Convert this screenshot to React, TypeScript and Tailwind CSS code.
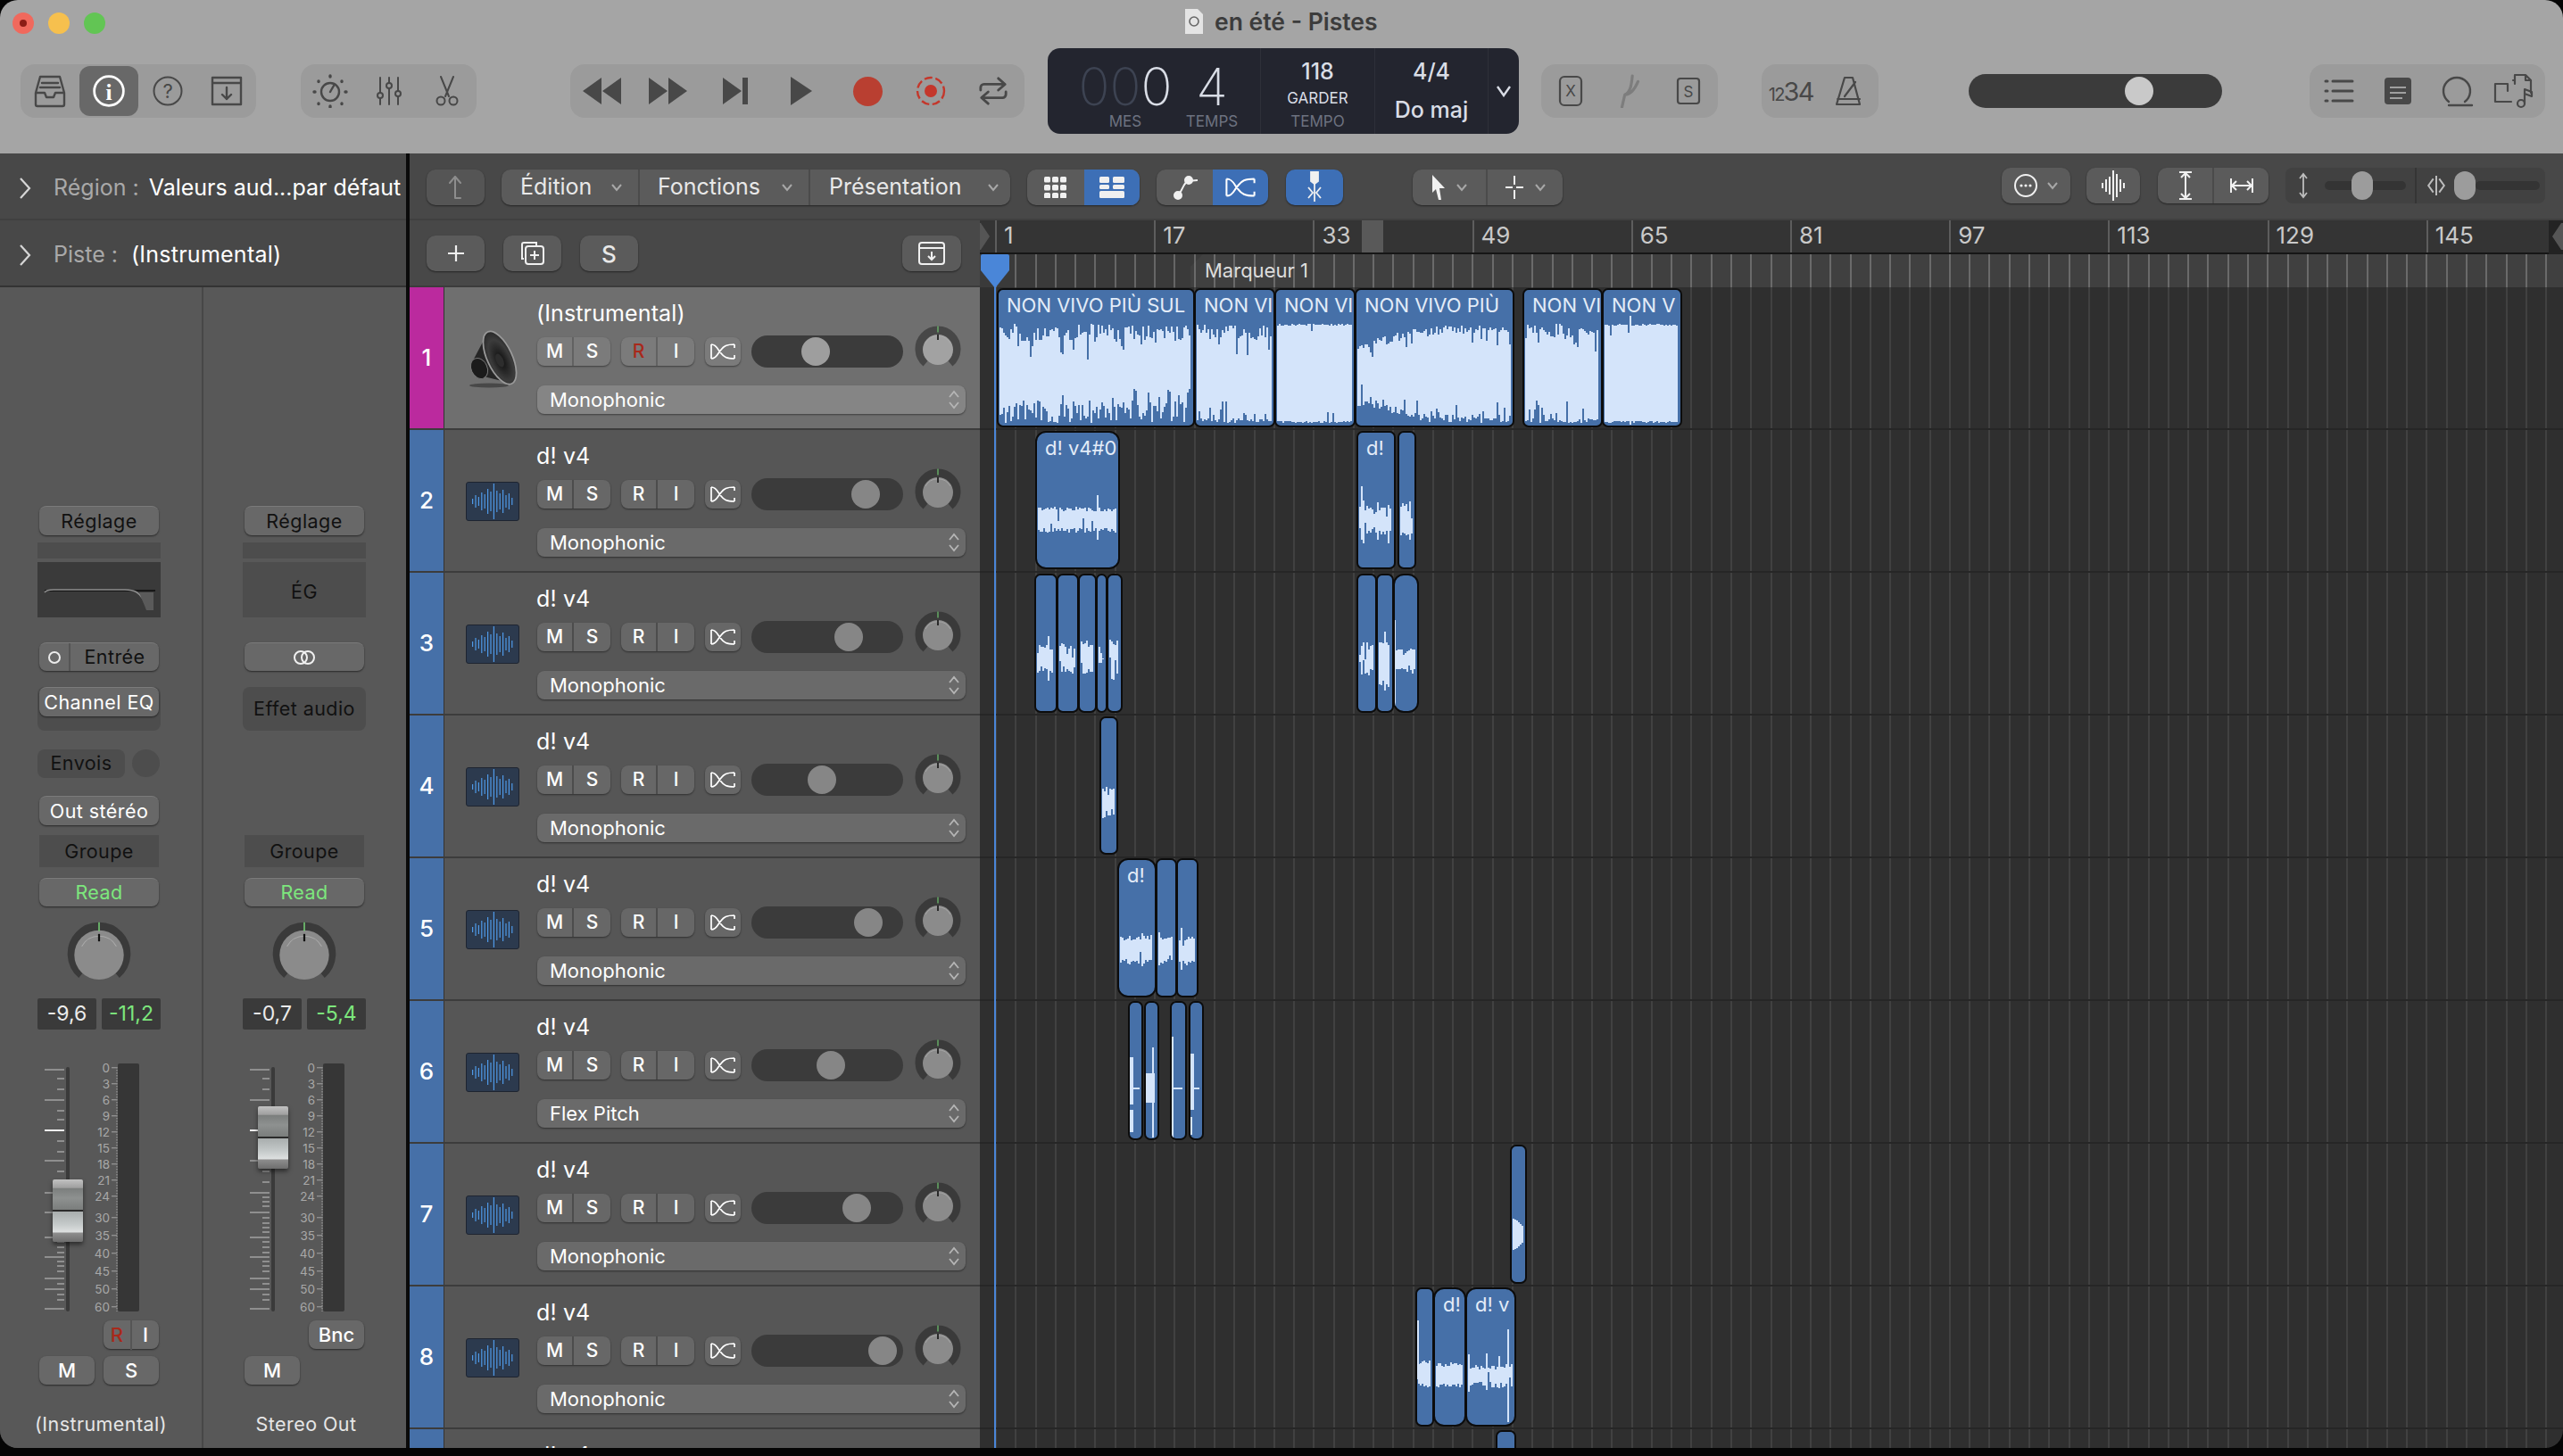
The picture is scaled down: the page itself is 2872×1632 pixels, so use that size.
import React from 'react';

// ---- small drawing helpers ----

function rng(seed: number) {
  let s = seed * 9301 + 49297;
  return () => {
    s = (s * 9301 + 49297) % 233280;
    return s / 233280;
  };
}

interface WaveOpts {
  y0: number;
  y1: number;
  jit: number;
  spike: number;
  p: number;
  bj?: number;
  ramp?: number;
  taper?: boolean;
}

function wavePath(seed: number, w: number, o: WaveOpts) {
  const r = rng(seed);
  let d = '';
  const mid = (o.y0 + o.y1) / 2;
  const bj = o.bj ?? o.jit;
  for (let x = 4; x < w - 3; x += 2) {
    const t = x / w;
    const ramp = o.ramp && t < 0.45 ? o.ramp * (1 - t / 0.45) : 0;
    let top = o.y0 + r() * o.jit + ramp + (r() < o.p ? r() * o.spike : 0);
    let bot = o.y1 - r() * bj - ramp - (r() < o.p ? r() * o.spike : 0);
    if (o.spike > 0 && o.jit < 9 && r() < o.p * 0.5) {
      top = o.y0 - r() * o.spike;
      bot = o.y1 + r() * o.spike * 0.6;
    }
    if (o.taper) {
      const k = 1 - t * t * 0.8;
      top = mid - (mid - o.y0) * k;
      bot = mid + (o.y1 - mid) * k;
    }
    d += `M${x} ${top.toFixed(0)}V${bot.toFixed(0)}`;
  }
  return d;
}

function Ico({ w = 36, h = 36, vb = '0 0 36 36', sw = 2.4, children, className = '' }: { w?: number; h?: number; vb?: string; sw?: number; children: React.ReactNode; className?: string }) {
  return (
    <svg width={w} height={h} viewBox={vb} fill="none" stroke="currentColor" strokeWidth={sw} strokeLinecap="round" strokeLinejoin="round" className={className}>
      {children}
    </svg>
  );
}

function Chevron({ className = 'text-[#a8a8a8]' }: { className?: string }) {
  return (
    <svg width="14" height="10" viewBox="0 0 14 10" fill="none" stroke="currentColor" strokeWidth="2" className={className}>
      <path d="M2 2l5 6 5-6" />
    </svg>
  );
}

function Bypass({ w = 30, h = 20 }: { w?: number; h?: number }) {
  return (
    <svg width={w} height={h} viewBox="0 0 30 20" fill="none" stroke="currentColor" strokeWidth="1.7">
      <path d="M2 2v16M2 2c3 0 5 1 8 6l3 4c3 4 6 6 15 6M2 18c3 0 5-1 8-6l3-4c3-4 6-6 15-6M28 2v4M28 18v-4" />
    </svg>
  );
}

function Knob({ size, inner, outerCol = '#3a3a3a', innerCol = '#8b8b8b' }: { size: number; inner: number; outerCol?: string; innerCol?: string }) {
  return (
    <svg width={size} height={size} viewBox="0 0 52 52">
      <path d="M13.1 41.3A20 20 0 1 1 38.9 41.3" fill="none" stroke={outerCol} strokeWidth="11" />
      <circle cx="26" cy="27" r={inner} fill={innerCol} />
      <path d="M12 20a16 16 0 0 1 28 0" fill="none" stroke="#ababab" strokeWidth="0.8" />
      <path d="M26 0.5v7" stroke="#7be07b" strokeWidth="1" />
      <path d="M26 10v6" stroke="#111" strokeWidth="1.6" />
    </svg>
  );
}

// ---- toolbar ----

function TGroup({ w, children }: { w: string; children: React.ReactNode }) {
  return <div className={`flex h-[60px] items-center rounded-[16px] bg-[#9b9b9b] text-[#484848] ${w}`}>{children}</div>;
}

function Slot({ children, className = '' }: { children: React.ReactNode; className?: string }) {
  return <div className={`flex flex-1 items-center justify-center ${className}`}>{children}</div>;
}

function Lcd() {
  return (
    <div className="ml-[26px] flex h-[96px] w-[528px] rounded-[14px] bg-[#23252f] text-[#d9dde6]">
      <div className="flex w-[239px] border-r border-[#2e3039] pl-[30px]">
        <div className="flex w-[114px] flex-col items-center">
          <div className="mt-[13px] h-[60px] text-[58px] font-extralight leading-[60px]">
            <span className="text-[#3d4352]">00</span>0
          </div>
          <div className="mt-[1px] text-[17px] leading-[16px] text-[#6d7280]">MES</div>
        </div>
        <div className="ml-[6px] flex w-[68px] flex-col items-center">
          <div className="mt-[13px] h-[60px] text-[58px] font-extralight leading-[60px]">4</div>
          <div className="mt-[1px] text-[17px] leading-[16px] text-[#6d7280]">TEMPS</div>
        </div>
      </div>
      <div className="flex w-[128px] flex-col items-center border-r border-[#2e3039]">
        <div className="mt-[11px] text-[25px] font-medium leading-[30px]">118</div>
        <div className="mt-[6px] text-[17px] leading-[18px]">GARDER</div>
        <div className="mt-[8px] text-[17px] leading-[18px] text-[#6d7280]">TEMPO</div>
      </div>
      <div className="flex w-[127px] flex-col items-center border-r border-[#2e3039]">
        <div className="mt-[11px] text-[25px] font-medium leading-[30px]">4/4</div>
        <div className="mt-[13px] text-[25px] font-medium leading-[30px]">Do maj</div>
      </div>
      <div className="flex flex-1 items-center justify-center">
        <svg width="20" height="14" viewBox="0 0 20 14" fill="none" stroke="#d9dde6" strokeWidth="2.4">
          <path d="M3 2l7 10 7-10" />
        </svg>
      </div>
    </div>
  );
}

function Toolbar() {
  return (
    <div className="h-[172px] shrink-0 bg-[#a5a5a5]">
      <div className="flex h-[54px] items-start">
        <div className="ml-[14px] mt-[14px] flex gap-[16px]">
          <div className="flex h-[24px] w-[24px] items-center justify-center rounded-full bg-[#f0695d]">
            <div className="h-[8px] w-[8px] rounded-full bg-[#8c1d16]" />
          </div>
          <div className="h-[24px] w-[24px] rounded-full bg-[#f6c04e]" />
          <div className="h-[24px] w-[24px] rounded-full bg-[#62c554]" />
        </div>
        <div className="ml-[1208px] mt-[10px] flex h-[28px] items-center">
          <svg width="22" height="28" viewBox="0 0 22 28">
            <path d="M2 0h14l6 6v22H2z" fill="#e4e4e4" />
            <circle cx="12" cy="14" r="5" fill="none" stroke="#666" strokeWidth="1.6" />
          </svg>
          <span className="ml-[13px] text-[26.5px] font-semibold leading-[28px] text-[#3c3c3c]">en été - Pistes</span>
        </div>
      </div>
      <div className="flex h-[96px] items-center pl-[23px]">
        <TGroup w="w-[264px]">
          <Slot>
            <Ico w={40} h={38} vb="0 0 40 38">
              <path d="M4 21v13a2 2 0 0 0 2 2h28a2 2 0 0 0 2-2V21L31 3H9zM4 21h10l2 5h8l2-5h10M11 10h18M9 15h22" />
            </Ico>
          </Slot>
          <Slot className="h-[56px] rounded-[12px] bg-[#686868] text-white">
            <svg width="38" height="38" viewBox="0 0 36 36">
              <circle cx="18" cy="18" r="15.5" fill="none" stroke="#fff" strokeWidth="2.6" />
              <text x="18" y="27" textAnchor="middle" fontSize="24" fontFamily="'Liberation Serif', serif" fontWeight="700" fill="#fff">i</text>
            </svg>
          </Slot>
          <Slot>
            <svg width="36" height="36" viewBox="0 0 36 36">
              <circle cx="18" cy="18" r="15.5" fill="none" stroke="#484848" strokeWidth="2" />
              <text x="18" y="26" textAnchor="middle" fontSize="22" fontFamily="Inter, sans-serif" fill="#484848">?</text>
            </svg>
          </Slot>
          <Slot>
            <Ico w={40} h={36} vb="0 0 40 36">
              <path d="M4 3h32v30H4zM4 9h32M20 14v13M15 22l5 5 5-5" />
            </Ico>
          </Slot>
        </TGroup>
        <div className="ml-[50px]">
          <TGroup w="w-[197px]">
            <Slot>
              <Ico w={40} h={38} vb="0 0 40 38">
                <circle cx="20" cy="20" r="10" />
                <path d="M20 20l4-7" />
                <path d="M20 2v1M7 8v.5M33 8v.5M2 20h1M37 20h1M7 33v.5M33 33v.5M20 36v1" strokeWidth="3.4" />
              </Ico>
            </Slot>
            <Slot>
              <Ico sw={2}>
                <path d="M8 3v30M18 3v30M28 3v30" />
                <circle cx="8" cy="23" r="3" fill="#9b9b9b" />
                <circle cx="18" cy="12" r="3" fill="#9b9b9b" />
                <circle cx="28" cy="21" r="3" fill="#9b9b9b" />
              </Ico>
            </Slot>
            <Slot>
              <Ico sw={2}>
                <path d="M11 2l9 22M25 2l-9 22" />
                <circle cx="11" cy="29" r="4.5" />
                <circle cx="25" cy="29" r="4.5" />
              </Ico>
            </Slot>
          </TGroup>
        </div>
        <div className="ml-[105px]">
          <div className="flex h-[60px] w-[509px] items-center rounded-[16px] bg-[#9b9b9b] text-[#484848]">
            <div className="flex w-[70px] justify-center">
              <svg width="48" height="34" viewBox="0 0 48 34" fill="currentColor"><path d="M24 2L3 17l21 15zM46 2L25 17l21 15z" /></svg>
            </div>
            <div className="flex w-[79px] justify-center">
              <svg width="48" height="34" viewBox="0 0 48 34" fill="currentColor"><path d="M2 2l21 15L2 32zM24 2l21 15-21 15z" /></svg>
            </div>
            <div className="flex w-[72px] justify-center">
              <svg width="32" height="34" viewBox="0 0 32 34" fill="currentColor"><path d="M2 2l21 15L2 32zM24 2h6v30h-6z" /></svg>
            </div>
            <div className="flex w-[76px] justify-center">
              <svg width="28" height="34" viewBox="0 0 28 34" fill="currentColor"><path d="M2 1l24 16L2 33z" /></svg>
            </div>
            <div className="flex w-[72px] justify-center">
              <div className="h-[33px] w-[33px] rounded-full bg-[#b93f31]" />
            </div>
            <div className="flex w-[70px] justify-center">
              <svg width="34" height="34" viewBox="0 0 34 34">
                <circle cx="17" cy="17" r="15" fill="none" stroke="#c4372b" strokeWidth="2.4" strokeDasharray="9 3.6" />
                <circle cx="17" cy="17" r="7" fill="#c4372b" />
              </svg>
            </div>
            <div className="flex flex-1 justify-center">
              <Ico w={36} h={34} vb="0 0 38 36">
                <path d="M4 17v-3a4 4 0 0 1 4-4h24M25 3l8 7-8 7M34 19v3a4 4 0 0 1-4 4H6M13 19l-8 7 8 7" strokeWidth="3" />
              </Ico>
            </div>
          </div>
        </div>
        <Lcd />
        <div className="ml-[25px]">
          <TGroup w="w-[198px]">
            <Slot>
              <svg width="30" height="36" viewBox="0 0 28 36">
                <rect x="2" y="2" width="24" height="32" rx="5" fill="none" stroke="#484848" strokeWidth="2.2" />
                <text x="14" y="24" textAnchor="middle" fontSize="17" fontFamily="Inter, sans-serif" fill="#484848">X</text>
              </svg>
            </Slot>
            <Slot className="text-[#7d7d7d]">
              <Ico w={38} h={38} vb="0 0 36 36" sw={3}>
                <path d="M10 35l3-13c6-3 7-10 8-20M13 22c6 0 11-7 14-14" />
              </Ico>
            </Slot>
            <Slot>
              <svg width="30" height="32" viewBox="0 0 28 32">
                <rect x="2" y="2" width="24" height="28" rx="3" fill="none" stroke="#484848" strokeWidth="2.2" />
                <text x="14" y="23" textAnchor="middle" fontSize="17" fontFamily="Inter, sans-serif" fill="#484848">S</text>
              </svg>
            </Slot>
          </TGroup>
        </div>
        <div className="ml-[49px]">
          <TGroup w="w-[131px]">
            <Slot>
              <span className="whitespace-nowrap text-[29px] leading-none tracking-[-0.06em]">
                <span className="text-[20px]">12</span>34
              </span>
            </Slot>
            <Slot>
              <Ico w={36} h={38} sw={2.2}>
                <path d="M13 3h9l8 30H4zM5 27h25M13 24L25 8" />
              </Ico>
            </Slot>
          </TGroup>
        </div>
        <div className="relative ml-[101px] h-[38px] w-[284px] rounded-[19px] bg-[#3b3b3b]">
          <div className="absolute left-[175px] top-[3px] h-[32px] w-[32px] rounded-full bg-[#c9c9c9]" />
        </div>
        <div className="ml-[98px]">
          <TGroup w="w-[264px]">
            <Slot>
              <Ico>
                <path d="M3 7h2M3 18h2M3 29h2M11 7h22M11 18h22M11 29h22" strokeWidth="3" />
              </Ico>
            </Slot>
            <Slot>
              <svg width="32" height="32" viewBox="0 0 32 32">
                <rect x="1" y="1" width="30" height="30" rx="4" fill="#484848" />
                <path d="M7 12h18M7 18h18M7 24h14" stroke="#a0a0a0" strokeWidth="2" />
              </svg>
            </Slot>
            <Slot>
              <Ico w={38} h={38} vb="0 0 38 38">
                <path d="M10 31a15 15 0 1 1 18 0M10 35h26" />
              </Ico>
            </Slot>
            <Slot>
              <Ico w={50} h={40} vb="0 0 50 40" sw={2.2}>
                <path d="M24 12V2h12l6 6v14M36 2v6h6M24 8h-2M16 12H2v20h18M16 12v8" />
                <circle cx="31" cy="34" r="4" />
                <path d="M35 34V18l8 3v5l-8-3" />
              </Ico>
            </Slot>
          </TGroup>
        </div>
      </div>
    </div>
  );
}

// ---- inspector ----

const btn = 'mx-[2px] flex h-[33px] items-center justify-center rounded-[8px] border-t border-[#7b7b7b] bg-[#686868] text-[21.5px] tracking-[0.02em] shadow-[0_1px_2px_rgba(0,0,0,0.55)]';
const flat = 'flex items-center justify-center bg-[#4d4d4d] text-[21.5px] tracking-[0.02em] text-[#111]';

const scale: [string, number][] = [
  ['0', 67], ['3', 85], ['6', 103], ['9', 121], ['12', 139], ['15', 157], ['18', 175], ['21', 193], ['24', 211],
  ['30', 235], ['35', 255], ['40', 275], ['45', 295], ['50', 315], ['60', 335],
];
const longTicks = [69, 103, 137, 171, 207, 229, 257, 279, 303, 315, 337];
const shortTicks = [79, 91, 115, 125, 149, 161, 183, 195, 212, 217, 222, 235, 241, 246, 251, 262, 268, 274, 284, 289, 295, 309, 321, 327];

function FaderMeter({ thumbTop }: { thumbTop: string }) {
  return (
    <div className="relative ml-[-42px] h-[288px] w-[226px]">
      <svg width="226" height="288" viewBox="0 62 226 288" className="overflow-visible">
        {longTicks.map((y) => (
          <rect key={y} x="50" y={y - 1} width="22" height="2" fill={y === 137 ? '#f2f2f2' : '#8f8f8f'} />
        ))}
        {shortTicks.map((y) => (
          <rect key={y} x="64" y={y - 1} width="8" height="2" fill="#8f8f8f" />
        ))}
        <rect x="74" y="66" width="4" height="274" rx="2" fill="#3a3a3a" />
        {scale.map(([l, y]) => (
          <g key={l}>
            <text x="123" y={y + 5} textAnchor="end" fontSize="13.5" fontFamily="Inter, sans-serif" fill="#a8a8a8">{l}</text>
            <rect x="125" y={y - 1} width="6" height="1.4" fill="#8f8f8f" />
          </g>
        ))}
        <path d="M131 66V340" stroke="#8f8f8f" strokeWidth="1.4" strokeDasharray="1.4 1.6" />
        <rect x="132" y="62" width="24" height="278" rx="2" fill="#363636" />
      </svg>
      <div
        className={`absolute left-[59px] h-[70px] w-[34px] rounded-[2px] bg-[linear-gradient(180deg,#c2c2c2_0%,#a0a0a0_13%,#7c7f7e_15%,#8e9190_30%,#7b7e7d_48%,#2b2b2b_49%,#2b2b2b_51%,#a9aeae_52%,#c5caca_72%,#dde0e0_84%,#8d8d8d_86%,#6e6e6e_100%)] shadow-[0_3px_5px_rgba(0,0,0,0.5)] ${thumbTop}`}
      />
    </div>
  );
}

function Inspector() {
  return (
    <div className="flex w-[455px] shrink-0 flex-col bg-[#484848]">
      <div className="flex h-[75px] shrink-0 items-center border-b-2 border-[#404040] pl-[20px] pt-[4px] text-[25px]">
        <svg width="16" height="28" viewBox="0 0 16 28" fill="none" stroke="#d6d6d6" strokeWidth="2.2"><path d="M3 3l10 11L3 25" /></svg>
        <span className="ml-[24px] whitespace-nowrap text-[#a9a9a9]">Région :</span>
        <span className="ml-[11px] whitespace-nowrap text-white">Valeurs aud...par défaut</span>
      </div>
      <div className="flex h-[75px] shrink-0 items-center border-b-2 border-[#333333] pl-[20px] pt-[4px] text-[25px]">
        <svg width="16" height="28" viewBox="0 0 16 28" fill="none" stroke="#d6d6d6" strokeWidth="2.2"><path d="M3 3l10 11L3 25" /></svg>
        <span className="ml-[24px] text-[#a9a9a9]">Piste :</span>
        <span className="ml-[15px] tracking-[0.01em] text-white">(Instrumental)</span>
      </div>
      <div className="flex flex-1 bg-[#585858]">
        {/* tranche 1 */}
        <div className="flex w-[228px] flex-col border-r-2 border-[#474747] pl-[42px] pr-[46px]">
          <div className={`mt-[245px] text-[#111] ${btn}`}>Réglage</div>
          <div className="mt-[8px] h-[18px] bg-[#4d4d4d]" />
          <div className="mt-[4px] h-[62px] bg-[#3a3a3a]">
            <svg width="138" height="62" viewBox="0 0 138 62" fill="none">
              <path d="M8 32h124" stroke="#0c0c0c" strokeWidth="1.6" />
              <path d="M8 34c2-3 6-3 10-3h80c12 0 16 4 20 10 3 5 5 9 6 11" stroke="#8d8d8d" strokeWidth="1.6" />
              <path d="M120 34h10v20h-8c-3-8-6-14-8-20" fill="#5a5a5a" />
            </svg>
          </div>
          <div className={`mt-[28px] !h-[32px] justify-start text-[#111] ${btn}`}>
            <div className="flex h-full w-[35px] items-center justify-center border-r-2 border-[#555555]">
              <div className="h-[14px] w-[14px] rounded-full border-2 border-[#ececec]" />
            </div>
            <span className="flex-1 text-center">Entrée</span>
          </div>
          <div className="mt-[18px] h-[49px] rounded-[8px] bg-[#4d4d4d]">
            <div className={`text-white ${btn}`}>Channel EQ</div>
          </div>
          <div className="mt-[20px] flex h-[33px] items-center">
            <div className={`h-[32px] w-[98px] rounded-[8px] ${flat}`}>Envois</div>
            <div className="ml-[8px] h-[31px] w-[31px] rounded-full bg-[#4d4d4d]" />
          </div>
          <div className={`mt-[20px] text-white ${btn}`}>Out stéréo</div>
          <div className={`mx-[2px] mt-[11px] h-[36px] ${flat}`}>Groupe</div>
          <div className={`mt-[12px] !h-[32px] text-[#7de77d] ${btn}`}>Read</div>
          <div className="mt-[17px] flex h-[72px] justify-center"><Knob size={72} inner={20} /></div>
          <div className="mt-[14px] flex h-[35px] gap-[6px]">
            <div className="flex w-[66px] items-center justify-center rounded-[2px] bg-[#3a3a3a] text-[23px] text-[#ececec]">-9,6</div>
            <div className="flex w-[66px] items-center justify-center rounded-[2px] bg-[#3a3a3a] text-[23px] text-[#7de77d]">-11,2</div>
          </div>
          <div className="mt-[38px]"><FaderMeter thumbTop="top-[130px]" /></div>
          <div className="ml-[74px] flex h-[32px] w-[62px] items-center rounded-[8px] bg-[#686868] text-[22px] font-medium text-white shadow-[0_1px_2px_rgba(0,0,0,0.55)]">
            <span className="flex-1 border-r-2 border-[#555555] text-center text-[#a8291b]">R</span>
            <span className="w-[30px] text-center">I</span>
          </div>
          <div className="mt-[8px] flex h-[32px] gap-[10px] px-[2px]">
            <div className="flex w-[62px] items-center justify-center rounded-[8px] bg-[#686868] text-[22px] font-medium text-white shadow-[0_1px_2px_rgba(0,0,0,0.55)]">M</div>
            <div className="flex w-[62px] items-center justify-center rounded-[8px] bg-[#686868] text-[22px] font-medium text-white shadow-[0_1px_2px_rgba(0,0,0,0.55)]">S</div>
          </div>
          <div className="mt-[29px] flex w-[142px] justify-center whitespace-nowrap text-[21.5px] leading-[30px] tracking-[0.02em] text-[#e6e6e6]">(Instrumental)</div>
        </div>
        {/* tranche 2 */}
        <div className="flex w-[227px] flex-col pl-[44px] pr-[45px]">
          <div className={`mt-[245px] text-[#111] ${btn}`}>Réglage</div>
          <div className="mt-[8px] h-[18px] bg-[#4d4d4d]" />
          <div className={`mt-[4px] h-[62px] pt-[4px] ${flat}`}>ÉG</div>
          <div className={`mt-[28px] !h-[32px] ${btn}`}>
            <svg width="26" height="16" viewBox="0 0 26 16" fill="none" stroke="#f0f0f0" strokeWidth="2">
              <circle cx="9" cy="8" r="7" />
              <circle cx="17" cy="8" r="7" />
            </svg>
          </div>
          <div className={`mt-[18px] h-[49px] rounded-[8px] ${flat}`}>Effet audio</div>
          <div className="h-[106px]" />
          <div className={`mx-[2px] mt-[11px] h-[36px] ${flat}`}>Groupe</div>
          <div className={`mt-[12px] !h-[32px] text-[#7de77d] ${btn}`}>Read</div>
          <div className="mt-[17px] flex h-[72px] justify-center"><Knob size={72} inner={20} /></div>
          <div className="mt-[14px] flex h-[35px] gap-[6px]">
            <div className="flex w-[66px] items-center justify-center rounded-[2px] bg-[#3a3a3a] text-[23px] text-[#ececec]">-0,7</div>
            <div className="flex w-[66px] items-center justify-center rounded-[2px] bg-[#3a3a3a] text-[23px] text-[#7de77d]">-5,4</div>
          </div>
          <div className="mt-[38px]"><FaderMeter thumbTop="top-[48px]" /></div>
          <div className="ml-[74px] flex h-[32px] w-[62px] items-center justify-center rounded-[8px] bg-[#686868] text-[22px] font-medium text-white shadow-[0_1px_2px_rgba(0,0,0,0.55)]">Bnc</div>
          <div className="mt-[8px] ml-[2px] flex h-[32px] w-[62px] items-center justify-center rounded-[8px] bg-[#686868] text-[22px] font-medium text-white shadow-[0_1px_2px_rgba(0,0,0,0.55)]">M</div>
          <div className="mt-[29px] flex w-[142px] justify-center whitespace-nowrap text-[21.5px] leading-[30px] tracking-[0.02em] text-[#e6e6e6]">Stereo Out</div>
        </div>
      </div>
    </div>
  );
}

// ---- second tool row ----

const rowShape = 'flex items-center rounded-[10px] shadow-[0_1px_2px_rgba(0,0,0,0.5)]';
const rowBtn = `${rowShape} bg-[#5b5b5b] text-[#e8e8e8]`;

function ArrangeTools() {
  return (
    <div className="flex h-[75px] shrink-0 items-start border-b-2 border-[#404040] bg-[#484848]">
      <div className={`ml-[19px] mt-[18px] h-[40px] w-[65px] justify-center bg-[#555555] text-[#8d8d8d] ${rowShape}`}>
        <Ico w={24} h={32} vb="0 0 24 32" sw={2}>
          <path d="M11 28V4M5 11l6-7 6 7M11 28h6" />
        </Ico>
      </div>
      <div className={`ml-[19px] mt-[18px] h-[40px] w-[570px] text-[25px] ${rowBtn}`}>
        <div className="flex h-full w-[155px] items-center justify-between border-r-2 border-[#4b4b4b] pl-[21px] pr-[17px]">Édition<Chevron /></div>
        <div className="flex h-full w-[191px] items-center justify-between border-r-2 border-[#4b4b4b] pl-[20px] pr-[17px]">Fonctions<Chevron /></div>
        <div className="flex h-full flex-1 items-center justify-between pl-[21px] pr-[12px]">Présentation<Chevron /></div>
      </div>
      <div className={`ml-[19px] mt-[18px] h-[40px] w-[126px] overflow-hidden ${rowBtn}`}>
        <div className="flex h-full w-[64px] items-center justify-center">
          <svg width="26" height="24" viewBox="0 0 26 24" fill="#f0f0f0">
            {[0, 9, 18].map((x) => [0, 9, 18].map((y) => <rect key={`${x}-${y}`} x={x} y={y} width="7" height="6.5" rx="1.5" />))}
          </svg>
        </div>
        <div className="flex h-full flex-1 items-center justify-center bg-[#3d6fb6]">
          <svg width="28" height="24" viewBox="0 0 28 24" fill="#f0f0f0">
            <rect x="0" y="0" width="11" height="7" rx="1.5" /><rect x="15" y="0" width="13" height="7" rx="1.5" />
            <rect x="0" y="9" width="11" height="5" rx="1.5" /><rect x="15" y="9" width="13" height="5" rx="1.5" />
            <rect x="0" y="16" width="28" height="8" rx="1.5" />
          </svg>
        </div>
      </div>
      <div className={`ml-[19px] mt-[18px] h-[40px] w-[125px] overflow-hidden ${rowBtn}`}>
        <div className="flex h-full w-[63px] items-center justify-center">
          <svg width="36" height="32" viewBox="0 0 36 32" fill="#f0f0f0" stroke="#f0f0f0" strokeWidth="2">
            <path d="M6 26c8 0 9-14 14-16 3-1 6-2 12-2" fill="none" />
            <circle cx="22" cy="8" r="4" /><circle cx="10" cy="25" r="4" />
          </svg>
        </div>
        <div className="flex h-full flex-1 items-center justify-center bg-[#3d6fb6] text-white">
          <Bypass w={36} h={28} />
        </div>
      </div>
      <div className={`ml-[20px] mt-[18px] h-[40px] w-[64px] justify-center bg-[#3d6fb6] ${rowShape}`}>
        <svg width="28" height="36" viewBox="0 0 28 36" fill="none" stroke="#f0f0f0" strokeWidth="1.8">
          <path d="M10 1h8v10l-4 3-4-3z" fill="#f0f0f0" />
          <path d="M14 12v22M7 18l5 6-5 6M21 18l-5 6 5 6" />
        </svg>
      </div>
      <div className={`ml-[78px] mt-[18px] h-[40px] w-[168px] ${rowBtn}`}>
        <div className="flex h-full w-[84px] items-center justify-center gap-[10px] border-r-2 border-[#4b4b4b]">
          <svg width="18" height="30" viewBox="0 0 18 30" fill="#f0f0f0"><path d="M2 1l14 15-6 0 2 13-3 0-3-12-4 4z" /></svg>
          <Chevron />
        </div>
        <div className="flex h-full flex-1 items-center justify-center gap-[10px]">
          <svg width="24" height="28" viewBox="0 0 24 28" fill="none" stroke="#f0f0f0" strokeWidth="2"><path d="M12 1v10M12 17v10M2 14h8M14 14h8" /></svg>
          <Chevron />
        </div>
      </div>
      <div className={`ml-[492px] mt-[16px] h-[40px] w-[77px] justify-center gap-[10px] ${rowBtn}`}>
        <svg width="26" height="30" viewBox="0 0 26 30" fill="#f0f0f0">
          <circle cx="13" cy="15" r="12" fill="none" stroke="#f0f0f0" strokeWidth="2" />
          <circle cx="8" cy="15" r="1.6" /><circle cx="13" cy="15" r="1.6" /><circle cx="18" cy="15" r="1.6" />
        </svg>
        <Chevron />
      </div>
      <div className={`ml-[18px] mt-[16px] h-[40px] w-[60px] justify-center ${rowBtn}`}>
        <svg width="28" height="36" viewBox="0 0 28 36" stroke="#f0f0f0" strokeWidth="2">
          <path d="M2 15v6M6 11v14M10 8v20M14 1v34M18 5v26M22 11v14M26 15v6" />
        </svg>
      </div>
      <div className={`ml-[20px] mt-[16px] h-[40px] w-[124px] ${rowBtn}`}>
        <div className="flex h-full w-[63px] items-center justify-center border-r-2 border-[#4b4b4b]">
          <svg width="18" height="34" viewBox="0 0 18 34" fill="none" stroke="#f0f0f0" strokeWidth="2"><path d="M2 2h14M2 32h14M9 2v30M4 8l5-5 5 5M4 26l5 5 5-5" /></svg>
        </div>
        <div className="flex h-full flex-1 items-center justify-center">
          <svg width="28" height="20" viewBox="0 0 28 20" fill="none" stroke="#f0f0f0" strokeWidth="2"><path d="M2 2v16M26 2v16M2 10h24M8 5l-5 5 5 5M20 5l5 5-5 5" /></svg>
        </div>
      </div>
      <div className="ml-[19px] mt-[16px] flex h-[40px] w-[291px] items-center rounded-[8px] bg-[#414141]">
        <div className="flex h-full w-[147px] items-center border-r-2 border-[#353535]">
          <svg width="12" height="30" viewBox="0 0 12 30" fill="none" stroke="#bdbdbd" strokeWidth="1.8" className="ml-[14px]"><path d="M6 2v26M2 7l4-5 4 5M2 23l4 5 4-5" /></svg>
          <div className="relative ml-[18px] h-[10px] w-[91px] rounded-[5px] bg-[#343434]">
            <div className="absolute left-[30px] top-[-11px] h-[32px] w-[24px] rounded-full bg-[#9c9c9c]" />
          </div>
        </div>
        <svg width="22" height="26" viewBox="0 0 20 22" fill="none" stroke="#bdbdbd" strokeWidth="1.8" className="ml-[11px]"><path d="M10 1v20M7 4L2 11l5 7M13 4l5 7-5 7" /></svg>
        <div className="relative ml-[33px] h-[10px] w-[72px] rounded-[5px] bg-[#343434]">
          <div className="absolute left-[-24px] top-[-11px] h-[32px] w-[24px] rounded-full bg-[#9c9c9c]" />
        </div>
      </div>
    </div>
  );
}

// ---- tracks ----

interface Track {
  n: number;
  name: string;
  thumb: number;
  mode: string;
}

const tracks: Track[] = [
  { n: 1, name: '(Instrumental)', thumb: 914, mode: 'Monophonic' },
  { n: 2, name: 'd! v4', thumb: 970, mode: 'Monophonic' },
  { n: 3, name: 'd! v4', thumb: 951, mode: 'Monophonic' },
  { n: 4, name: 'd! v4', thumb: 921, mode: 'Monophonic' },
  { n: 5, name: 'd! v4', thumb: 973, mode: 'Monophonic' },
  { n: 6, name: 'd! v4', thumb: 931, mode: 'Flex Pitch' },
  { n: 7, name: 'd! v4', thumb: 960, mode: 'Monophonic' },
  { n: 8, name: 'd! v4', thumb: 989, mode: 'Monophonic' },
  { n: 9, name: 'd! v4', thumb: 930, mode: 'Monophonic' },
];

function Speaker() {
  return (
    <svg width="60" height="66" viewBox="0 0 60 66">
      <defs>
        <radialGradient id="cone" cx="0.5" cy="0.55" r="0.6">
          <stop offset="0" stopColor="#0d0d0d" />
          <stop offset="0.65" stopColor="#3c3c3c" />
          <stop offset="1" stopColor="#222222" />
        </radialGradient>
      </defs>
      <ellipse cx="26" cy="62" rx="22" ry="2.5" fill="#000" opacity="0.35" />
      <path d="M8 34L25 2 53 60 20 52z" fill="#262626" />
      <ellipse cx="15" cy="43" rx="9" ry="12" transform="rotate(-25 15 43)" fill="#1b1b1b" stroke="#777" strokeWidth="1" />
      <ellipse cx="38" cy="31" rx="14" ry="32" transform="rotate(-25 38 31)" fill="url(#cone)" stroke="#9a9a9a" strokeWidth="1.8" />
      <ellipse cx="38" cy="34" rx="4" ry="8" transform="rotate(-25 38 34)" fill="#2d2d2d" />
    </svg>
  );
}

function WaveIcon() {
  const bars = [3, 7, 5, 10, 8, 14, 11, 20, 12, 9, 13, 7, 9, 4];
  return (
    <div className="flex h-[44px] w-[60px] items-center justify-center rounded-[3px] border border-[#1e2430] bg-[#2c3a4e]">
      <svg width="48" height="44" viewBox="0 0 48 44">
        {bars.map((h, i) => (
          <rect key={i} x={1 + i * 3.4} y={22 - h} width="1.2" height={h * 2} fill="#4f9ae8" />
        ))}
      </svg>
    </div>
  );
}

function TrackRow({ t }: { t: Track }) {
  const first = t.n === 1;
  const bg = first ? 'bg-[#6f6f6f]' : 'bg-[#565656]';
  const b = first ? 'bg-[#7b7b7b]' : 'bg-[#676767]';
  const div = first ? 'border-[#626262]' : 'border-[#4c4c4c]';
  const seg = `flex h-[32px] items-center rounded-[8px] text-[21px] font-medium text-white shadow-[0_1px_2px_rgba(0,0,0,0.45)] ${b}`;
  return (
    <div className={`flex h-[160px] shrink-0 border-t-2 border-[#3c3c3c] ${bg}`}>
      <div className={`flex w-[39px] shrink-0 items-center justify-center border-r border-[#333333] pb-[2px] text-[26px] font-medium text-white ${first ? 'bg-[#bb2a9e]' : 'bg-[#4670a8]'}`}>
        {t.n}
      </div>
      <div className="flex w-[104px] shrink-0 items-start pl-[24px]">
        {first ? <div className="mt-[48px]"><Speaker /></div> : <div className="mt-[58px]"><WaveIcon /></div>}
      </div>
      <div className="w-[480px] shrink-0">
        <div className="ml-[-1px] mt-[14px] h-[30px] whitespace-nowrap text-[25px] leading-[30px] tracking-[0.005em] text-white">{t.name}</div>
        <div className="mt-[12px] flex h-[32px] items-center">
          <div className={`w-[82px] ${seg}`}>
            <span className={`w-[41px] border-r-2 text-center ${div}`}>M</span>
            <span className="flex-1 text-center">S</span>
          </div>
          <div className={`ml-[12px] w-[82px] ${seg}`}>
            <span className={`w-[41px] border-r-2 text-center ${div} ${first ? 'text-[#a8291b]' : ''}`}>R</span>
            <span className="flex-1 text-center">I</span>
          </div>
          <div className={`ml-[12px] w-[40px] justify-center ${seg}`}>
            <Bypass />
          </div>
          <div className="relative ml-[12px] h-[36px] w-[170px] rounded-[18px] bg-[#3b3b3b]">
            <div className={`absolute top-[2px] h-[32px] w-[32px] rounded-full ${first ? 'bg-[#9e9e9e]' : 'bg-[#868686]'}`} style={{ left: t.thumb - 842 - 16 }} />
          </div>
          <div className="ml-[13px] mt-[-6px]">
            <Knob size={52} inner={17} outerCol={first ? '#474747' : '#3a3a3a'} innerCol={first ? '#a2a2a2' : '#8b8b8b'} />
          </div>
        </div>
        <div className={`mt-[22px] flex h-[32px] items-center justify-between rounded-[8px] pl-[14px] pr-[6px] text-[22px] text-white shadow-[0_1px_2px_rgba(0,0,0,0.45)] ${first ? 'bg-[#858585]' : 'bg-[#6a6a6a]'}`}>
          {t.mode}
          <svg width="14" height="24" viewBox="0 0 14 24" fill="none" stroke="#b5b5b5" strokeWidth="1.8"><path d="M2 9l5-6 5 6M2 15l5 6 5-6" /></svg>
        </div>
      </div>
    </div>
  );
}

function TrackList() {
  return (
    <div className="flex w-[639px] shrink-0 flex-col overflow-hidden">
      <div className="flex h-[73px] shrink-0 items-start bg-[#484848] pl-[19px]">
        <div className={`mt-[17px] h-[40px] w-[65px] justify-center ${rowBtn}`}>
          <svg width="22" height="22" viewBox="0 0 22 22" stroke="#f0f0f0" strokeWidth="2.2"><path d="M11 2v18M2 11h18" /></svg>
        </div>
        <div className={`ml-[21px] mt-[17px] h-[40px] w-[65px] justify-center ${rowBtn}`}>
          <svg width="32" height="32" viewBox="0 0 32 32" fill="none" stroke="#f0f0f0" strokeWidth="2">
            <path d="M6 22H4V6a2 2 0 0 1 2-2h14v4" />
            <rect x="8" y="8" width="20" height="20" rx="3" />
            <path d="M18 13v10M13 18h10" />
          </svg>
        </div>
        <div className={`ml-[21px] mt-[17px] h-[40px] w-[65px] justify-center text-[26px] font-medium ${rowBtn}`}>S</div>
        <div className={`ml-[296px] mt-[17px] h-[40px] w-[66px] justify-center ${rowBtn}`}>
          <svg width="32" height="28" viewBox="0 0 32 28" fill="none" stroke="#f0f0f0" strokeWidth="2">
            <rect x="2" y="2" width="28" height="24" rx="3" />
            <path d="M2 8h28M16 12v9M12 17l4 4 4-4" />
          </svg>
        </div>
      </div>
      {tracks.map((t) => (
        <TrackRow key={t.n} t={t} />
      ))}
    </div>
  );
}

// ---- arrange ----

interface Region {
  x0: number;
  x1: number;
  y0: number;
  y1: number;
  label?: string;
  wave?: WaveOpts;
  rects?: [number, number, number, number][];
  round?: boolean;
}

const regions: Region[] = [
  { x0: 1118, x1: 1339, y0: 323, y1: 479, label: 'NON VIVO PIÙ SUL', wave: { y0: 40, y1: 151, jit: 20, spike: 24, p: 0.25, bj: 24 } },
  { x0: 1339, x1: 1429, y0: 323, y1: 479, label: 'NON VI', wave: { y0: 40, y1: 151, jit: 18, spike: 24, p: 0.3, bj: 5 } },
  { x0: 1429, x1: 1519, y0: 323, y1: 479, label: 'NON VI', wave: { y0: 40, y1: 151, jit: 2, spike: 18, p: 0.06 } },
  { x0: 1519, x1: 1697, y0: 323, y1: 479, label: 'NON VIVO PIÙ', wave: { y0: 42, y1: 151, jit: 10, spike: 18, p: 0.16, ramp: 20 } },
  { x0: 1707, x1: 1796, y0: 323, y1: 479, label: 'NON VI', wave: { y0: 40, y1: 151, jit: 18, spike: 24, p: 0.3, bj: 5 } },
  { x0: 1796, x1: 1885, y0: 323, y1: 479, label: 'NON V', wave: { y0: 40, y1: 151, jit: 2, spike: 18, p: 0.06 } },

  { x0: 1161, x1: 1255, y0: 483, y1: 638, label: 'd! v4#0', wave: { y0: 85, y1: 114, jit: 5, spike: 14, p: 0.08 }, round: true },
  { x0: 1521, x1: 1564, y0: 483, y1: 638, label: 'd!', wave: { y0: 84, y1: 116, jit: 8, spike: 26, p: 0.18 } },
  { x0: 1567, x1: 1587, y0: 483, y1: 638, wave: { y0: 80, y1: 118, jit: 5, spike: 18, p: 0.2 } },

  { x0: 1160, x1: 1185, y0: 643, y1: 799, wave: { y0: 78, y1: 112, jit: 8, spike: 16, p: 0.2 } },
  { x0: 1185, x1: 1209, y0: 643, y1: 799, wave: { y0: 78, y1: 112, jit: 6, spike: 12, p: 0.15 } },
  { x0: 1209, x1: 1229, y0: 643, y1: 799, wave: { y0: 74, y1: 114, jit: 6, spike: 10, p: 0.15 } },
  { x0: 1229, x1: 1241, y0: 643, y1: 799, wave: { y0: 80, y1: 108, jit: 8, spike: 12, p: 0.2 } },
  { x0: 1241, x1: 1258, y0: 643, y1: 799, wave: { y0: 70, y1: 120, jit: 10, spike: 20, p: 0.3 } },
  { x0: 1521, x1: 1543, y0: 643, y1: 799, wave: { y0: 76, y1: 114, jit: 8, spike: 20, p: 0.2 } },
  { x0: 1543, x1: 1562, y0: 643, y1: 799, wave: { y0: 72, y1: 128, jit: 6, spike: 10, p: 0.2 } },
  { x0: 1562, x1: 1590, y0: 643, y1: 799, wave: { y0: 82, y1: 112, jit: 6, spike: 12, p: 0.2 }, round: true, rects: [[1563, 695, 2, 96]] },

  { x0: 1233, x1: 1253, y0: 803, y1: 958, wave: { y0: 78, y1: 114, jit: 6, spike: 10, p: 0.2 } },

  { x0: 1253, x1: 1296, y0: 962, y1: 1118, label: 'd!', wave: { y0: 86, y1: 119, jit: 6, spike: 16, p: 0.14 }, round: true },
  { x0: 1296, x1: 1319, y0: 962, y1: 1118, wave: { y0: 88, y1: 118, jit: 4, spike: 6, p: 0.1 } },
  { x0: 1319, x1: 1343, y0: 962, y1: 1118, wave: { y0: 86, y1: 120, jit: 6, spike: 10, p: 0.2 } },

  { x0: 1265, x1: 1281, y0: 1122, y1: 1278, rects: [[1267, 1185, 4, 53], [1267, 1244, 4, 25], [1271, 1219, 7, 1.5]] },
  { x0: 1283, x1: 1299, y0: 1122, y1: 1278, rects: [[1285, 1203, 10, 33], [1292, 1174, 2, 101]] },
  { x0: 1312, x1: 1330, y0: 1122, y1: 1278, rects: [[1314, 1162, 2, 113], [1316, 1219, 10, 1.5]] },
  { x0: 1333, x1: 1349, y0: 1122, y1: 1278, rects: [[1335, 1181, 3.5, 63], [1335, 1252, 2, 20], [1338, 1219, 7, 1.5]] },

  { x0: 1693, x1: 1711, y0: 1283, y1: 1439, wave: { y0: 82, y1: 119, jit: 0, spike: 0, p: 0, taper: true } },

  { x0: 1587, x1: 1607, y0: 1443, y1: 1599, wave: { y0: 82, y1: 112, jit: 4, spike: 6, p: 0.1 }, rects: [[1589, 1480, 2, 66]] },
  { x0: 1607, x1: 1643, y0: 1443, y1: 1599, label: 'd!', wave: { y0: 84, y1: 112, jit: 5, spike: 8, p: 0.12 }, round: true },
  { x0: 1643, x1: 1699, y0: 1443, y1: 1599, label: 'd! v', wave: { y0: 86, y1: 112, jit: 6, spike: 14, p: 0.14 }, round: true, rects: [[1690, 1490, 2, 104]] },

  { x0: 1677, x1: 1699, y0: 1603, y1: 1680 },
];

function RegionBlock({ r, i }: { r: Region; i: number }) {
  const w = r.x1 - r.x0;
  const h = r.y1 - r.y0;
  return (
    <div
      className={`absolute overflow-hidden border-2 border-[#0c0c0c] bg-[#4670a8] ${r.round ? 'rounded-[12px]' : 'rounded-[7px]'}`}
      style={{ left: r.x0 - 1099, top: r.y0 - 322, width: w + 1, height: h }}
    >
      <svg width={w + 1} height={h} className="absolute left-[-2px] top-[-2px]" shapeRendering="crispEdges">
        {r.wave && <path d={wavePath(i + 3, w, r.wave)} stroke="#d4e4fa" strokeWidth="2" fill="none" />}
        {r.rects?.map((q, k) => (
          <rect key={k} x={q[0] - r.x0} y={q[1] - r.y0} width={q[2]} height={q[3]} fill="#d4e4fa" />
        ))}
      </svg>
      {r.label && (
        <div className="relative whitespace-nowrap pl-[9px] pt-[3px] text-[22px] leading-[28px] text-[#e3ecf8]">{r.label}</div>
      )}
    </div>
  );
}

function Arrange() {
  const bars = ['1', '17', '33', '49', '65', '81', '97', '113', '129', '145'];
  return (
    <div className="relative flex min-w-0 flex-1 flex-col overflow-hidden bg-[#2f2f2f]">
      {/* règle */}
      <div className="flex h-[38px] shrink-0 items-start border-b-2 border-[#161616] bg-[#343434] pl-[17px]">
        {bars.map((b) => (
          <div key={b} className="h-[36px] w-[178.2px] shrink-0 border-l-2 border-[#5d5d5d] pl-[8px] text-[26px] leading-[33px] text-[#c9c9c9]">
            {b}
          </div>
        ))}
      </div>
      {/* marqueurs */}
      <div className="relative flex h-[37px] shrink-0 items-center bg-[#3a3a3a] bg-[repeating-linear-gradient(90deg,transparent_0,transparent_17px,#666666_17px,#666666_19px,transparent_19px,transparent_22.27px)]">
        <div className="ml-[236px] flex h-full flex-1 items-center bg-white/[0.03] pl-[16px] text-[22px] text-[#dddddd] [clip-path:polygon(14px_0,100%_0,100%_100%,0_100%,0_14px)]">Marqueur 1</div>
      </div>
      {/* pistes */}
      <div className="relative flex-1 bg-[repeating-linear-gradient(90deg,transparent_0,transparent_17px,#414141_17px,#414141_19px,transparent_19px,transparent_22.27px)]">
        {[160, 160, 160, 160, 160, 160, 160, 160].map((h, i) => (
          <div key={i} className="border-b-2 border-[#262626]" style={{ height: h }} />
        ))}
        {regions.map((r, i) => (
          <RegionBlock key={i} r={r} i={i} />
        ))}
      </div>
      {/* tête de lecture */}
      <div className="absolute bottom-0 left-[16px] top-[38px] w-[2px] bg-[#4a86d8]" />
      <svg width="34" height="38" viewBox="0 0 34 38" className="absolute left-0 top-[38px]">
        <path d="M3 0h28a2 2 0 0 1 2 2v16L17 38 1 18V2a2 2 0 0 1 2-2z" fill="#4a86d8" />
      </svg>
      <svg width="12" height="30" viewBox="0 0 12 30" className="absolute left-[-1px] top-[3px]">
        <path d="M0 0h2l10 15L2 30H0z" fill="#555555" />
      </svg>
      <div className="absolute left-[428px] top-0 h-[36px] w-[24px] bg-[#595959]" />
      <div className="absolute right-0 top-0 h-[38px] w-[16px] bg-[#232323]" />
      <svg width="12" height="30" viewBox="0 0 12 30" className="absolute right-0 top-[3px]">
        <path d="M12 0h-2L0 15l10 15h2z" fill="#555555" />
      </svg>
    </div>
  );
}

export default function App() {
  return (
    <div className="h-[1632px] w-[2872px] overflow-hidden bg-[#050505] font-[Inter,sans-serif]">
      <div className="flex h-[1623px] flex-col overflow-hidden rounded-[20px]">
        <Toolbar />
        <div className="flex min-h-0 flex-1">
          <Inspector />
          <div className="w-[4px] shrink-0 bg-[#0a0a0a]" />
          <div className="flex min-w-0 flex-1 flex-col">
            <ArrangeTools />
            <div className="flex min-h-0 flex-1">
              <TrackList />
              <Arrange />
            </div>
          </div>
        </div>
      </div>
    </div>
  );
}
